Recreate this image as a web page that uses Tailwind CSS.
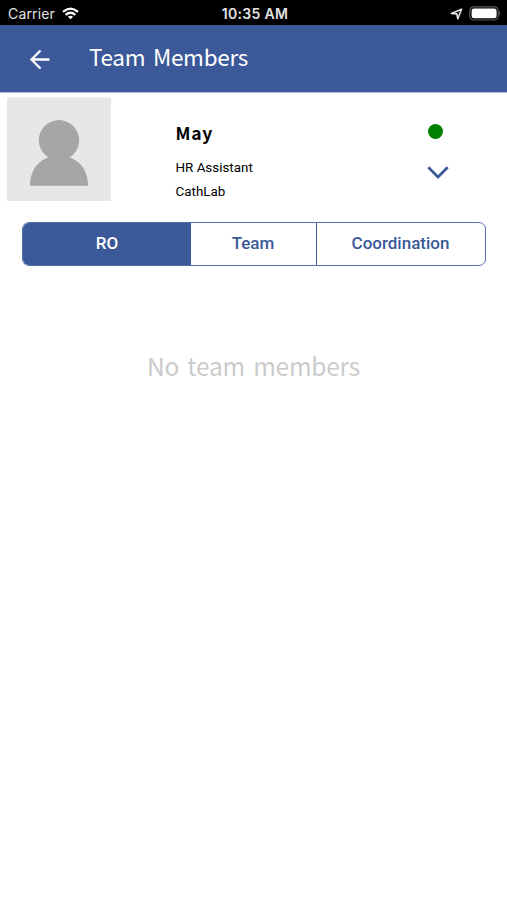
<!DOCTYPE html>
<html lang="en">
<head>
<meta charset="utf-8">
<title>Team Members</title>
<script src="https://cdn.jsdelivr.net/npm/@tailwindcss/browser@4"></script>
</head>
<body class="w-[507px] h-[900px] overflow-hidden bg-white flex flex-col">
  <div class="h-[25px] shrink-0 bg-black text-[#e4e4e4] grid grid-cols-[1fr_auto_1fr] items-center pl-[8px] pr-[5px] pt-[2px] font-['Inter',sans-serif]">
    <div class="flex items-center gap-[7px]">
      <span class="text-[14px] leading-[20px] tracking-[0.15px]">Carrier</span>
      <svg class="w-[17px] h-[13px]" viewBox="0 0 17 13" fill="none" stroke="#fff" stroke-width="2.3"><path d="M1 4.8Q8.5-1.6 16 4.8M3.7 7.8Q8.5 3.7 13.3 7.8"/><path d="M8.5 12.3 5.9 9.7Q8.5 7.7 11.1 9.7Z" fill="#fff" stroke="none"/></svg>
    </div>
    <span class="text-[14px] leading-[20px] font-semibold tracking-[0.3px]">10:35 AM</span>
    <div class="flex items-center justify-end gap-[6px]">
      <svg class="w-[13px] h-[12px]" viewBox="0 0 13 12" fill="none" stroke="#e4e4e4" stroke-width="1.6" stroke-linejoin="round"><path d="M1.300 5.500 11.500 1.200 7.800 10.800 6.800 5.900Z"/></svg>
      <svg class="w-[33px] h-[15px]" viewBox="0 0 33 15"><rect x=".8" y=".8" width="28.4" height="13.2" rx="4" fill="none" stroke="#5c5c5c" stroke-width="1.2"/><rect x="2.6" y="2.5" width="25" height="9.8" rx="2.4" fill="#fff"/><path d="M30.3 5.100q1.9 2.300 0 4.600z" fill="#777"/></svg>
    </div>
  </div>
  <header class="h-[68px] shrink-0 bg-[#3b5998] border-b border-[#b5bfda] flex items-center pl-[29px] gap-[39px] text-white">
    <svg class="w-[21px] h-[20px]" viewBox="0 0 21 20" fill="none" stroke="#fff" stroke-width="2.3"><path d="M20.500 10.500H2.500M11.500 1.500 2.500 10.500 11.500 19.500"/></svg>
    <h1 class="font-['Noto_Sans_CJK_SC',sans-serif] text-[22.5px] leading-[32px] [word-spacing:3px] tracking-[-0.3px] whitespace-nowrap -mt-[5px]">Team Members</h1>
  </header>
  <main class="flex flex-col">
    <section class="flex h-[129px] pl-[7px] pt-[4px]">
      <svg class="w-[104px] h-[104px] shrink-0" viewBox="0 0 104 104"><rect y=".4" width="104" height="103.600" rx="1" fill="#e7e7e7"/><circle cx="52" cy="43.300" r="20.2" fill="#a6a6a6"/><path d="M23 88.700C23 70 35 58.700 52 58.700S81 70 81 88.700Z" fill="#a6a6a6"/></svg>
      <div class="flex flex-col pl-[64.5px] w-[315.5px] pt-[22px] text-black">
        <h2 class="font-['Noto_Sans_CJK_SC',sans-serif] font-bold text-[17.500px] leading-[28px] tracking-[0.8px]">May</h2>
        <p class="font-['Roboto',sans-serif] text-[13.4px] leading-[24px] mt-[9px]">HR Assistant</p>
        <p class="font-['Roboto',sans-serif] text-[13.4px] leading-[24px]">CathLab</p>
      </div>
      <div class="flex flex-col items-center pt-[27px] w-[22px]">
        <span class="w-[15px] h-[15px] rounded-full bg-[#008000] -ml-[4px]"></span>
        <svg class="w-[22px] h-[14px] mt-[27px]" viewBox="0 0 22 14" fill="none" stroke="#3b5998" stroke-width="2.7"><path d="M1.300 1.300 11 11 20.700 1.300"/></svg>
      </div>
    </section>
    <nav class="ml-[22px] w-[464px] h-[44px] flex border border-[#5570a8] rounded-[7px] overflow-hidden font-['Roboto',sans-serif] font-medium text-[17px] text-[#3b5998] leading-[41px] text-center">
      <span class="w-[168px] bg-[#3b5998] text-white">RO</span>
      <span class="w-[126px] pr-px border-r border-[#3b5998]">Team</span>
      <span class="flex-1 pr-px">Coordination</span>
    </nav>
    <p class="font-['Noto_Sans_CJK_SC',sans-serif] text-[24.500px] leading-[36px] [word-spacing:3px] tracking-[-0.25px] text-[#cbcbcb] text-center mt-[82px]">No team members</p>
  </main>
</body>
</html>
